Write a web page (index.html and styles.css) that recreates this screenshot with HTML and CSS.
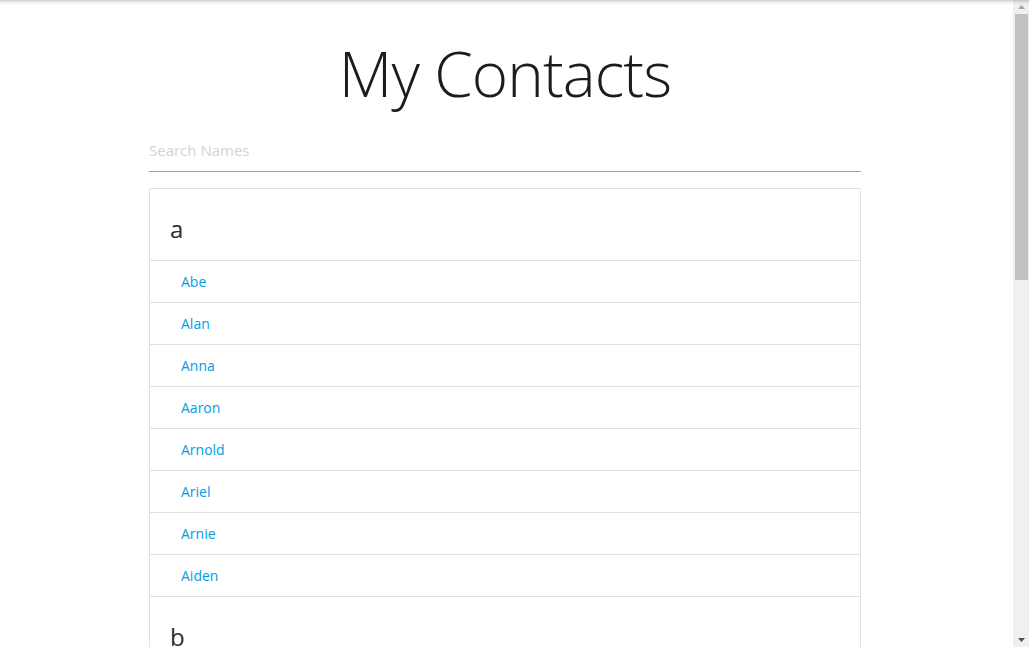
FILE: index.html
```html
<!DOCTYPE html>
<html lang="en">
<head>
<meta charset="utf-8">
<title>My Contacts</title>
<link rel="stylesheet" href="styles.css">
</head>
<body>
<div class="window">
  <main class="page">
    <div class="container">
      <h1 class="title">My Contacts</h1>
      <input class="search" type="text" placeholder="Search Names">
      <ul class="collection">
        <li class="collection-header"><h5>a</h5></li>
        <li class="collection-item"><a href="#">Abe</a></li>
        <li class="collection-item"><a href="#">Alan</a></li>
        <li class="collection-item"><a href="#">Anna</a></li>
        <li class="collection-item"><a href="#">Aaron</a></li>
        <li class="collection-item"><a href="#">Arnold</a></li>
        <li class="collection-item"><a href="#">Ariel</a></li>
        <li class="collection-item"><a href="#">Arnie</a></li>
        <li class="collection-item"><a href="#">Aiden</a></li>
        <li class="collection-header"><h5>b</h5></li>
      </ul>
    </div>
  </main>
  <div class="scrollbar" aria-hidden="true">
    <div class="sb-btn">
      <svg width="7" height="4" viewBox="0 0 7 4"><path d="M3.5 0 L7 4 L0 4 Z" fill="#a3a3a3"/></svg>
    </div>
    <div class="sb-thumb"></div>
    <div class="sb-track"></div>
    <div class="sb-btn">
      <svg width="7" height="4" viewBox="0 0 7 4"><path d="M0 0 L7 0 L3.5 4 Z" fill="#505050"/></svg>
    </div>
  </div>
  <div class="top-shadow"></div>
</div>
</body>
</html>
```

FILE: styles.css
```css
html, body {
  margin: 0;
  padding: 0;
  height: 647px;
  overflow: hidden;
  background: #fff;
}

body {
  font-family: "Open Sans", "Noto Sans", "DejaVu Sans", sans-serif;
  color: rgba(0, 0, 0, 0.87);
}

.window {
  position: relative;
  display: flex;
  height: 647px;
}

.page {
  flex: 1;
  min-width: 0;
  height: 647px;
  overflow: hidden;
  padding-right: 3px;
}

.container {
  width: 712px;
  margin: 0 auto;
}

.title {
  margin: 38px 0 20px;
  font-size: 62px;
  line-height: 70px;
  font-weight: 300;
  letter-spacing: -0.9px;
  text-align: center;
  color: #1c1c1c;
}

.search {
  display: block;
  box-sizing: border-box;
  width: 100%;
  height: 44px;
  margin: 0;
  padding: 0;
  border: none;
  border-bottom: 1px solid #9e9e9e;
  outline: none;
  background: transparent;
  font-family: inherit;
  font-size: 15px;
  color: #212121;
}

.search::placeholder {
  color: #d3d3d3;
}

.collection {
  list-style: none;
  margin: 16px 0 0;
  padding: 0;
  border: 1px solid #e0e0e0;
  border-radius: 2px;
}

.collection-header {
  padding: 25px 20px 16px;
  border-bottom: 1px solid #e0e0e0;
}

.collection-header h5 {
  margin: 0;
  font-size: 24px;
  line-height: 30px;
  font-weight: 400;
  color: #2b2b2b;
}

.collection-item {
  padding: 10px 31px;
  line-height: 21px;
  font-size: 14px;
  border-bottom: 1px solid #e0e0e0;
}

.collection-item a {
  color: #039be5;
  text-decoration: none;
}

.scrollbar {
  width: 16px;
  flex: none;
  display: flex;
  flex-direction: column;
  background: #f0f0f0;
}

.sb-btn {
  height: 14px;
  flex: none;
  display: flex;
  align-items: center;
  justify-content: center;
  padding-left: 1px;
}

.sb-thumb {
  height: 266px;
  flex: none;
  margin: 0 1px 0 2px;
  background: #c1c1c1;
}

.sb-track {
  flex: 1;
}

.top-shadow {
  position: absolute;
  left: 0;
  right: 0;
  top: 0;
  height: 6px;
  background: linear-gradient(to bottom, rgba(0, 0, 0, 0.2), rgba(0, 0, 0, 0.07) 2px, rgba(0, 0, 0, 0.02) 4px, rgba(0, 0, 0, 0) 6px);
  pointer-events: none;
}
```
